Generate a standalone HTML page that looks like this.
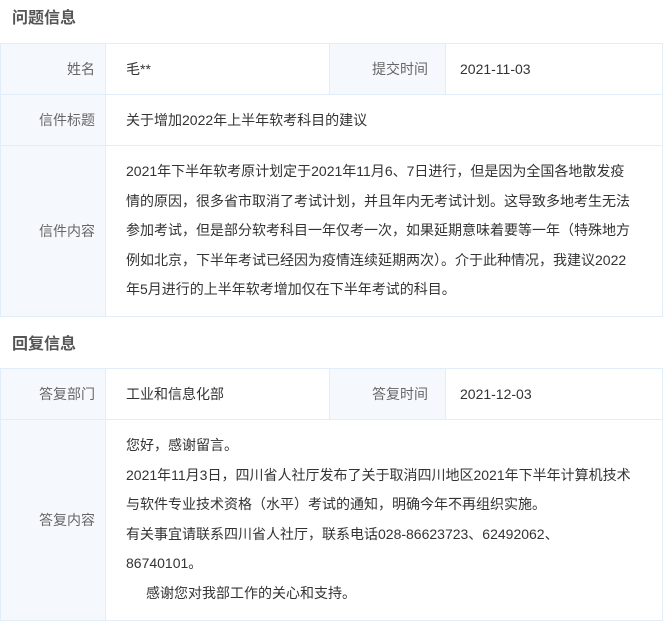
<!DOCTYPE html><html><head><meta charset="utf-8"><style>
body{margin:0;width:665px;height:625px;background:#fff;font-family:"Liberation Sans","Noto Sans CJK SC",sans-serif;font-size:14px;color:#333;position:relative;overflow:hidden}
.h{position:absolute;left:12px;font-size:16px;font-weight:bold;color:#555}
.c{position:absolute;box-sizing:border-box;border:1px solid #e1edf9}
.l{background:#f5f9fe;color:#666;text-align:right;padding-right:10px;display:flex;align-items:center;justify-content:flex-end}
.v{display:flex;align-items:center;padding-left:20px}
.t{padding:11px 0 0 20px;line-height:29.6px;display:block;white-space:nowrap}
</style></head><body>
<div class="h" style="top:4px">问题信息</div>
<div class="c l" style="left:0;top:43px;width:106px;height:52px">姓名</div>
<div class="c v" style="left:105px;top:43px;width:225px;height:52px">毛**</div>
<div class="c l" style="left:329px;top:43px;width:117px;height:52px;padding-right:17px">提交时间</div>
<div class="c v" style="left:445px;top:43px;width:218px;height:52px;padding-left:14px">2021-11-03</div>
<div class="c l" style="left:0;top:94px;width:106px;height:52px">信件标题</div>
<div class="c v" style="left:105px;top:94px;width:558px;height:52px">关于增加2022年上半年软考科目的建议</div>
<div class="c l" style="left:0;top:145px;width:106px;height:172px">信件内容</div>
<div class="c t" style="left:105px;top:145px;width:558px;height:172px">2021年下半年软考原计划定于2021年11月6、7日进行，但是因为全国各地散发疫<br>情的原因，很多省市取消了考试计划，并且年内无考试计划。这导致多地考生无法<br>参加考试，但是部分软考科目一年仅考一次，如果延期意味着要等一年（特殊地方<br>例如北京，下半年考试已经因为疫情连续延期两次）。介于此种情况，我建议2022<br>年5月进行的上半年软考增加仅在下半年考试的科目。</div>
<div class="h" style="top:330px">回复信息</div>
<div class="c l" style="left:0;top:368px;width:106px;height:52px">答复部门</div>
<div class="c v" style="left:105px;top:368px;width:225px;height:52px">工业和信息化部</div>
<div class="c l" style="left:329px;top:368px;width:117px;height:52px;padding-right:17px">答复时间</div>
<div class="c v" style="left:445px;top:368px;width:218px;height:52px;padding-left:14px">2021-12-03</div>
<div class="c l" style="left:0;top:419px;width:106px;height:202px">答复内容</div>
<div class="c t" style="left:105px;top:419px;width:558px;height:202px">您好，感谢留言。<br>2021年11月3日，四川省人社厅发布了关于取消四川地区2021年下半年计算机技术<br>与软件专业技术资格（水平）考试的通知，明确今年不再组织实施。<br>有关事宜请联系四川省人社厅，联系电话028-86623723、62492062、<br>86740101。<br><span style="padding-left:20px">感谢您对我部工作的关心和支持。</span></div>
</body></html>
